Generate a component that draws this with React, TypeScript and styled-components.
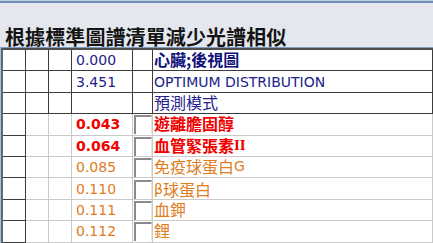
import React from 'react';
import styled, { createGlobalStyle } from 'styled-components';

const Global = createGlobalStyle`
  html, body { margin: 0; padding: 0; background: #ffffff; }
  body {
    width: 433px; height: 243px; overflow: hidden;
    font-family: "DejaVu Sans", "Noto Sans CJK TC", sans-serif;
  }
`;

const Page = styled.div`
  display: flex;
  flex-direction: column;
  width: 433px;
`;

const TopBar = styled.div`
  height: 1px;
  background: #bfcfe1;
  border-bottom: 2px solid #6d8fb6;
`;

const Header = styled.div`
  height: 44px;
  box-sizing: border-box;
  background: #e4e7ee;
  display: flex;
  align-items: flex-end;
  padding: 0 0 0 5px;
`;

const Title = styled.h1`
  margin: 0;
  font-family: "Noto Sans CJK TC", sans-serif;
  font-weight: 700;
  font-size: 20px;
  line-height: 20px;
  color: #141414;
  letter-spacing: 0.1px;
`;

const Frame = styled.div`
  border-top: 1px solid #7e9dc1;
  border-left: 1px solid #a9bdd3;
`;

const Table = styled.table`
  width: 432px;
  table-layout: fixed;
  border-collapse: separate;
  border-spacing: 0;
  border-top: 2px solid #4e4e4e;
  border-left: 2px solid #5f6976;
`;

const Col = styled.col<{ $w?: number }>`
  width: ${(p) => (p.$w ? `${p.$w}px` : 'auto')};
`;

const Row = styled.tr`
  height: 21.4px;
`;

const Cell = styled.td<{ $dark?: boolean; $pad?: number }>`
  box-sizing: border-box;
  padding: 0 0 0 ${(p) => p.$pad ?? 0}px;
  border-right: 1px solid ${(p) => (p.$dark ? '#3c3c3c' : '#cacaca')};
  border-bottom: 1px solid ${(p) => (p.$dark ? '#3c3c3c' : '#cacaca')};
  white-space: nowrap;
  vertical-align: middle;
  font-size: 14px;
  line-height: 16px;
`;

type Tone = 'navy' | 'red' | 'orange';

const toneColor: Record<Tone, string> = {
  navy: '#22228a',
  red: '#f00000',
  orange: '#e07c22',
};

const Value = styled.span<{ $tone: Tone; $bold?: boolean }>`
  color: ${(p) => toneColor[p.$tone]};
  font-weight: ${(p) => (p.$bold ? 700 : 400)};
`;

const Name = styled.span<{ $tone: Tone; $bold?: boolean }>`
  color: ${(p) => (p.$tone === 'navy' && p.$bold ? '#10107a' : toneColor[p.$tone])};
  font-weight: ${(p) => (p.$bold ? 700 : 400)};
  display: inline-flex;
  align-items: center;
`;

const Zh = styled.span`
  font-family: "Noto Sans CJK TC", sans-serif;
  font-size: 16px;
  line-height: 16px;
`;

const Serif = styled.span`
  font-family: "Liberation Serif", serif;
  font-size: 15px;
`;

const Check = styled.span`
  display: block;
  box-sizing: border-box;
  width: 18px;
  height: 19px;
  margin: 1px 0 0 1px;
  background: #ffffff;
  border-top: 2px solid #8a8a8a;
  border-left: 2px solid #8a8a8a;
  border-right: 1px solid #e4e4e4;
`;

type Item = {
  value: string;
  tone: Tone;
  bold?: boolean;
  nameBold?: boolean;
  name: React.ReactNode;
  check?: boolean;
  dark?: boolean;
};

const items: Item[] = [
  { value: '0.000', tone: 'navy', nameBold: true, name: <Zh>心臟;後視圖</Zh>, dark: true },
  { value: '3.451', tone: 'navy', name: 'OPTIMUM DISTRIBUTION', dark: true },
  { value: '', tone: 'navy', name: <Zh>預測模式</Zh>, dark: true },
  { value: '0.043', tone: 'red', bold: true, nameBold: true, name: <Zh>遊離膽固醇</Zh>, check: true },
  {
    value: '0.064', tone: 'red', bold: true, nameBold: true, check: true,
    name: (<><Zh>血管緊張素</Zh><Serif>II</Serif></>),
  },
  { value: '0.085', tone: 'orange', check: true, name: (<><Zh>免疫球蛋白</Zh>G</>) },
  { value: '0.110', tone: 'orange', check: true, name: (<>β<Zh>球蛋白</Zh></>) },
  { value: '0.111', tone: 'orange', check: true, name: <Zh>血鉀</Zh> },
  { value: '0.112', tone: 'orange', check: true, name: <Zh>鋰</Zh> },
];

export default function App() {
  return (
    <>
      <Global />
      <Page>
        <TopBar />
        <Header>
          <Title>根據標準圖譜清單減少光譜相似</Title>
        </Header>
        <Frame>
          <Table>
            <colgroup>
              <Col $w={23} />
              <Col $w={23} />
              <Col $w={23} />
              <Col $w={61} />
              <Col $w={20} />
              <Col />
            </colgroup>
            <tbody>
              {items.map((it, i) => (
                <Row key={i}>
                  <Cell $dark />
                  <Cell $dark={it.dark} />
                  <Cell $dark={it.dark} />
                  <Cell $dark={it.dark} $pad={4}>
                    <Value $tone={it.tone} $bold={it.bold}>{it.value}</Value>
                  </Cell>
                  <Cell $dark={it.dark}>{it.check && <Check />}</Cell>
                  <Cell $dark={it.dark} $pad={1}>
                    <Name $tone={it.tone} $bold={it.nameBold}>{it.name}</Name>
                  </Cell>
                </Row>
              ))}
            </tbody>
          </Table>
        </Frame>
      </Page>
    </>
  );
}
